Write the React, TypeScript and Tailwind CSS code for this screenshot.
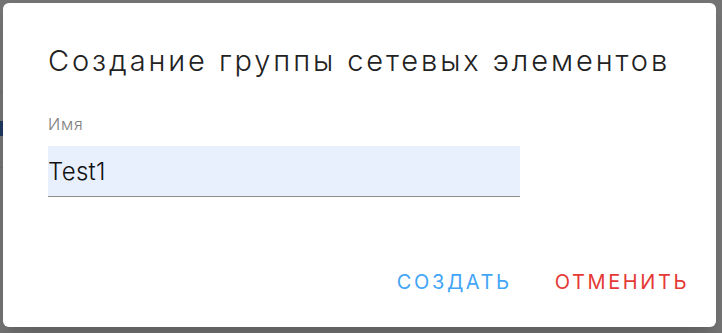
export default function App() {
  return (
    <div
      className="relative h-[333px] w-[722px] overflow-hidden bg-[#737373]"
      style={{ fontFamily: "Inter, 'Noto Sans', sans-serif" }}
    >
      {/* backdrop hints of the page below */}
      <div className="absolute left-0 top-[92px] h-px w-[3px] bg-[#666]" />
      <div className="absolute left-0 top-[121px] h-[15px] w-[3px] bg-[#1c3559]" />
      <div className="absolute left-0 top-[167px] h-px w-[3px] bg-[#666]" />

      <div className="p-[3px] pr-[6px] pb-[6px]">
        <div className="flex h-[324px] flex-col rounded-[6px] bg-white shadow-xl">
          <h2 className="px-[45px] pt-[40px] text-[29px] font-light leading-[36px] tracking-[2.9px] text-[#222]">
            Создание группы сетевых элементов
          </h2>

          <label className="mt-[35px] flex flex-col px-[45px]">
            <span className="text-[16px] font-light leading-[20px] tracking-[0.8px] text-[#7d7d7d]">Имя</span>
            <input
              defaultValue="Test1"
              className="mt-[12px] h-[51px] w-[472px] border-b border-[#8c8c8c] bg-[#e8f0fe] text-[24px] font-light tracking-[0.3px] text-[#111] outline-none"
            />
          </label>

          <div className="mt-auto flex justify-end gap-[43px] pb-[33px] pr-[27px]">
            <button className="text-[20px] font-normal uppercase leading-[24px] tracking-[2.6px] text-[#42a5f5]">Создать</button>
            <button className="text-[20px] font-normal uppercase leading-[24px] tracking-[2.6px] text-[#e53935]">Отменить</button>
          </div>
        </div>
      </div>
    </div>
  );
}
